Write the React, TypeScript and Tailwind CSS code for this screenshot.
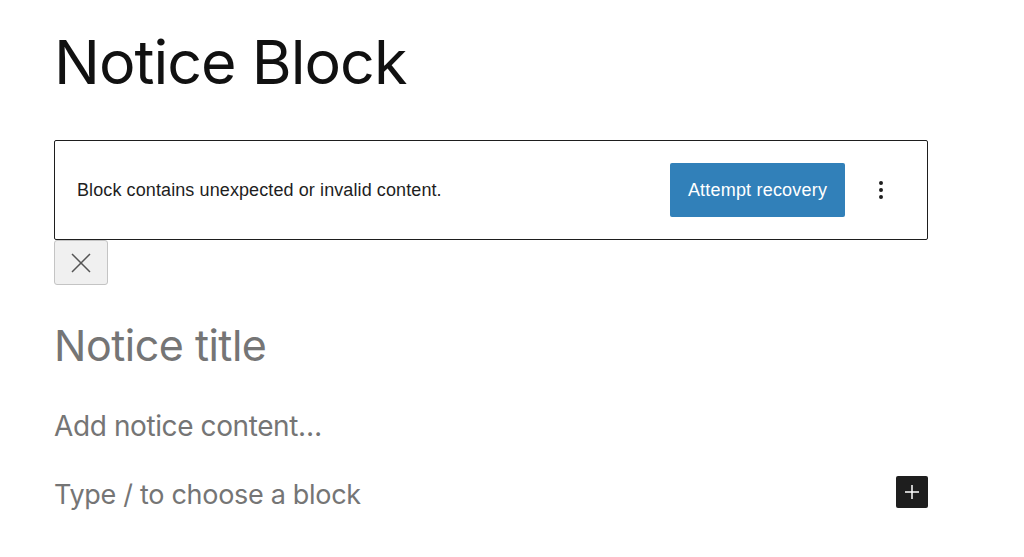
import { MoreVertical } from 'lucide-react';

export default function App() {
  return (
    <div className="min-h-screen bg-white">
      <div className="w-[874px] ml-[54px] pt-[22px]">
        {/* Block title */}
        <h1 className="text-[61px] leading-[80px] text-[#111111] font-['Inter',sans-serif] tracking-[-1px]">
          Notice Block
        </h1>

        {/* Invalid block warning */}
        <div className="mt-[38px] h-[100px] border border-[#1e1e1e] rounded-[2px] flex items-center pl-[22px] pr-[34px] font-['Liberation_Sans',sans-serif]">
          <p className="flex-1 text-[18px] text-[#1e1e1e] tracking-[0.1px]">
            Block contains unexpected or invalid content.
          </p>
          <button className="h-[54px] w-[175px] bg-[#3180b9] text-white text-[18px] rounded-[2px] tracking-[0.2px]">
            Attempt recovery
          </button>
          <MoreVertical className="ml-[24px] w-6 h-6 text-[#1e1e1e]" strokeWidth={2} />
        </div>

        <button className="w-[54px] h-[45px] bg-[#f0f0f0] border border-[#c4c4c4] rounded-[3px] flex items-center justify-center">
          <svg width="24" height="24" viewBox="0 0 24 24" fill="none" stroke="#555" strokeWidth="1.5">
            <path d="M3 3l18 18M21 3L3 21" />
          </svg>
        </button>

        {/* Placeholders */}
        <div className="font-['Inter',sans-serif] text-[#757575]">
          <p className="mt-[32px] text-[43px] leading-[56px] tracking-[-0.5px]">Notice title</p>
          <p className="mt-[33px] text-[28px] leading-[40px] tracking-[-0.4px]">Add notice content…</p>
          <div className="mt-[28px] flex items-center justify-between">
            <p className="text-[27px] leading-[40px] tracking-[-0.3px] translate-y-[1px]">Type / to choose a block</p>
            <button className="w-8 h-8 bg-[#1e1e1e] rounded-[2px] flex items-center justify-center -translate-y-[2px]">
              <svg width="20" height="20" viewBox="0 0 20 20" fill="none" stroke="white" strokeWidth="1.5">
                <path d="M10 3v14M3 10h14" />
              </svg>
            </button>
          </div>
        </div>
      </div>
    </div>
  );
}
